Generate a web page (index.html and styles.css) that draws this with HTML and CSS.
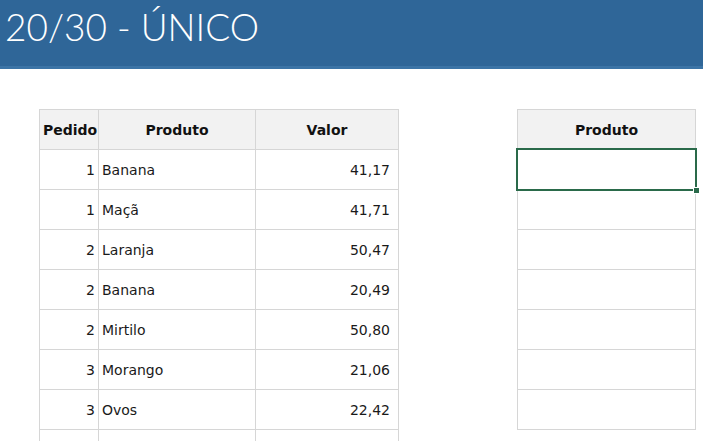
FILE: index.html
```html
<!DOCTYPE html>
<html lang="pt">
<head>
<meta charset="utf-8">
<title>20/30 - ÚNICO</title>
<link rel="stylesheet" href="styles.css">
</head>
<body>
<header class="banner"><h1 class="title">20/30 - ÚNICO</h1></header>
<main class="sheet">
  <table class="grid orders">
    <colgroup><col class="c-ped"><col class="c-prod"><col class="c-val"></colgroup>
    <thead>
      <tr><th>Pedido</th><th>Produto</th><th>Valor</th></tr>
    </thead>
    <tbody>
      <tr><td class="num">1</td><td>Banana</td><td class="val">41,17</td></tr>
      <tr><td class="num">1</td><td>Maçã</td><td class="val">41,71</td></tr>
      <tr><td class="num">2</td><td>Laranja</td><td class="val">50,47</td></tr>
      <tr><td class="num">2</td><td>Banana</td><td class="val">20,49</td></tr>
      <tr><td class="num">2</td><td>Mirtilo</td><td class="val">50,80</td></tr>
      <tr><td class="num">3</td><td>Morango</td><td class="val">21,06</td></tr>
      <tr><td class="num">3</td><td>Ovos</td><td class="val">22,42</td></tr>
      <tr><td class="num"></td><td></td><td class="val"></td></tr>
    </tbody>
  </table>
  <table class="grid unique">
    <thead><tr><th>Produto</th></tr></thead>
    <tbody>
      <tr><td class="selected"><span class="sel-box"></span><span class="sel-handle"></span></td></tr>
      <tr><td></td></tr>
      <tr><td></td></tr>
      <tr><td></td></tr>
      <tr><td></td></tr>
      <tr><td></td></tr>
      <tr><td></td></tr>
    </tbody>
  </table>
</main>
</body>
</html>
```
FILE: styles.css
```css
html, body {
  margin: 0;
  padding: 0;
  background: #ffffff;
  overflow: hidden;
}
body {
  width: 703px;
  height: 441px;
  font-family: "DejaVu Sans", "Open Sans", sans-serif;
  color: #1a1a1a;
}
.banner {
  height: 66px;
  background: #2f6698;
  border-bottom: 3px solid #3c74a6;
  display: flex;
  align-items: center;
}
.title {
  margin: 0 0 0 5px;
  font-family: "Lato", "DejaVu Sans", sans-serif;
  font-weight: 300;
  font-size: 37px;
  letter-spacing: 0;
  color: #ffffff;
  line-height: 1;
  position: relative;
  top: -7px;
}
.sheet {
  display: flex;
  align-items: flex-start;
  padding: 40px 0 0 39px;
  gap: 118px;
  height: 332px;
  overflow: hidden;
}
.grid {
  border-collapse: collapse;
  table-layout: fixed;
  font-size: 14px;
}
.grid th, .grid td {
  border: 1px solid #d6d6d6;
  height: 40px;
  padding: 0 3px;
  box-sizing: border-box;
  white-space: nowrap;
}
.grid th {
  background: #f2f2f2;
  font-weight: bold;
  text-align: center;
  color: #111;
}
.orders {
  width: 360px;
}
.c-ped { width: 59px; }
.c-prod { width: 157px; }
.c-val { width: 143px; }
.num { text-align: right; }
.val { text-align: right; padding-right: 8px !important; }
.unique {
  width: 179px;
}
.selected {
  position: relative;
}
.sel-box {
  position: absolute;
  left: -2px;
  top: -2px;
  right: -2px;
  bottom: -2px;
  border: 2px solid #2a6a4a;
}
.sel-handle {
  position: absolute;
  right: -5px;
  bottom: -5px;
  width: 5px;
  height: 5px;
  background: #2a6a4a;
  border: 1px solid #ffffff;
}
```
